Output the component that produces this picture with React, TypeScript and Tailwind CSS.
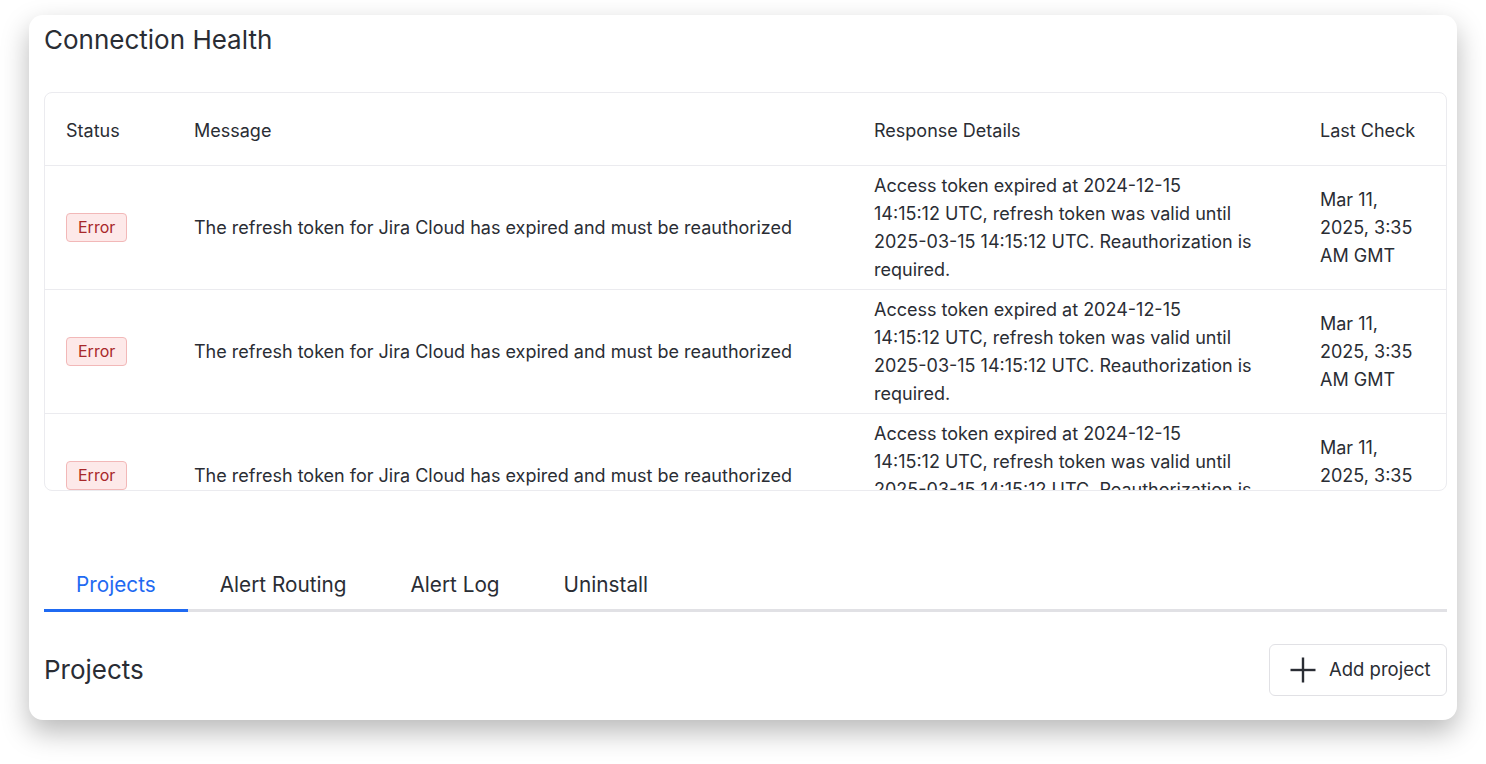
import React from 'react';

const rows = [1, 2, 3].map(() => ({
  status: 'Error',
  message: 'The refresh token for Jira Cloud has expired and must be reauthorized',
  details: [
    'Access token expired at 2024-12-15',
    '14:15:12 UTC, refresh token was valid until',
    '2025-03-15 14:15:12 UTC. Reauthorization is',
    'required.',
  ],
  lastCheck: 'Mar 11, 2025, 3:35 AM GMT',
}));

const tabs = ['Projects', 'Alert Routing', 'Alert Log', 'Uninstall'];

const PlusIcon = () => (
  <svg width="26" height="26" viewBox="0 0 26 26" fill="none" stroke="currentColor" strokeWidth="2.4">
    <line x1="0.5" y1="13" x2="25.5" y2="13" />
    <line x1="13" y1="0.5" x2="13" y2="25.5" />
  </svg>
);

const App: React.FC = () => {
  return (
    <div
      className="w-full h-[764px] bg-white pt-[15px] pl-[29px] text-[#2a2d34]"
      style={{ fontFamily: 'Inter, "Noto Sans", sans-serif' }}
    >
      <div className="w-[1428px] h-[705px] rounded-[14px] bg-white shadow-[0_12px_28px_rgba(0,0,0,0.28)] pl-[15px] pr-[10px] pt-[9px]">
        <h2 className="text-[26px] leading-[32px] font-normal">Connection Health</h2>

        <div className="mt-[36px] h-[399px] overflow-hidden rounded-[8px] border border-[#ebebef]">
          <table className="w-full table-fixed border-collapse text-[18px]">
            <colgroup>
              <col className="w-[128px]" />
              <col className="w-[680px]" />
              <col className="w-[446px]" />
              <col />
            </colgroup>
            <thead>
              <tr className="h-[72px] border-b border-[#ebebef] text-left">
                <th className="pl-[21px] pt-[4px] font-normal">Status</th>
                <th className="pl-[21px] pt-[4px] font-normal">Message</th>
                <th className="pl-[21px] pt-[4px] font-normal">Response Details</th>
                <th className="pl-[21px] pt-[4px] font-normal">Last Check</th>
              </tr>
            </thead>
            <tbody>
              {rows.map((r, i) => (
                <tr key={i} className="border-b border-[#ebebef] align-middle">
                  <td className="pl-[21px] pt-[6px] pb-[5px]">
                    <span className="inline-block rounded-[4px] border border-[#f2b8b8] bg-[#fde9e9] px-[11px] text-[16px] leading-[27px] text-[#a8282a]">
                      {r.status}
                    </span>
                  </td>
                  <td className="pl-[21px] pt-[6px] pb-[5px] leading-[28px]">{r.message}</td>
                  <td className="pl-[21px] pt-[6px] pb-[5px] leading-[28px]">
                    {r.details.map((line) => (
                      <span key={line} className="block whitespace-nowrap">
                        {line}
                      </span>
                    ))}
                  </td>
                  <td className="pl-[21px] pr-[22px] pt-[6px] pb-[5px] leading-[28px]">{r.lastCheck}</td>
                </tr>
              ))}
            </tbody>
          </table>
        </div>

        <div className="mt-[67px] flex border-b-[3px] border-[#e1e1e5]">
          {tabs.map((t, i) => (
            <button
              key={t}
              className={
                i === 0
                  ? 'px-[32px] pt-[13px] pb-[10px] text-[20.75px] leading-[28px] text-[#1f6af2] border-b-[3px] border-[#1f6af2] -mb-[3px]'
                  : 'px-[32px] pt-[13px] pb-[10px] text-[20.75px] leading-[28px] text-[#2a2d34] border-b-[3px] border-transparent -mb-[3px]'
              }
            >
              {t}
            </button>
          ))}
        </div>

        <div className="mt-[32px] flex items-center justify-between">
          <h2 className="text-[26px] leading-[32px]">Projects</h2>
          <button className="flex h-[52px] w-[178px] items-center gap-[13px] rounded-[6px] border border-[#e1e1e5] pl-[20px] text-[18.5px]">
            <PlusIcon />
            <span>Add project</span>
          </button>
        </div>
      </div>
    </div>
  );
};

export default App;
